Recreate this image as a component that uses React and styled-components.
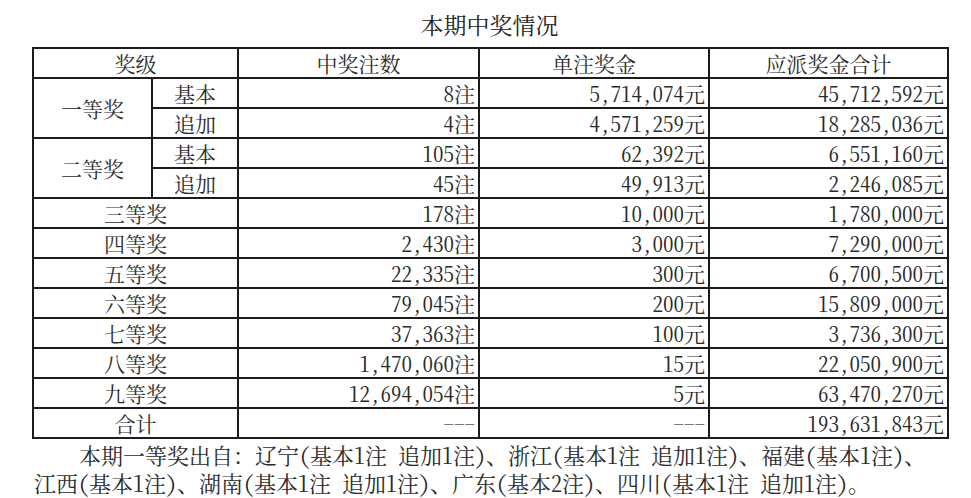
import React from 'react'
import styled, { createGlobalStyle } from 'styled-components'

const GlobalStyle = createGlobalStyle`
  html, body {
    margin: 0;
    padding: 0;
    background: #fff;
  }
  body {
    font-family: "Noto Serif CJK SC", "Liberation Serif", "Noto Sans CJK SC", serif;
    font-feature-settings: "hwid" 1;
    color: #2a2a2a;
  }
`

const Page = styled.div`
  width: 971px;
  padding: 10px 0 0 32px;
  box-sizing: border-box;
`

const Title = styled.h1`
  width: 915px;
  margin: 0 0 7px;
  height: 30px;
  line-height: 30px;
  font-size: 23px;
  font-weight: normal;
  text-align: center;
  color: #222;
`

const Table = styled.table`
  width: 915px;
  table-layout: fixed;
  border-collapse: collapse;
  border: 2px solid #1c1c1c;
  font-size: 21px;
`

const Row = styled.tr`
  height: 30px;
`

const Cell = styled.td`
  border: 2px solid #1c1c1c;
  padding: 0 ${p => (p.$align === 'right' ? '3px' : '0')} 0 0;
  text-align: ${p => p.$align || 'center'};
  vertical-align: middle;
  line-height: 26px;
  white-space: nowrap;
  color: ${p => (p.$muted ? '#777' : '#2a2a2a')};
`

const HeadCell = styled(Cell).attrs({ as: 'th' })`
  font-weight: normal;
`

const Note = styled.p`
  width: 915px;
  margin: 2px 0 0;
  padding-left: 2px;
  font-size: 22px;
  line-height: 28px;
  text-indent: 45px;
  color: #2a2a2a;
  box-sizing: border-box;
`

const tiered = [
  {
    level: '一等奖',
    parts: [
      ['基本', '8注', '5,714,074元', '45,712,592元'],
      ['追加', '4注', '4,571,259元', '18,285,036元'],
    ],
  },
  {
    level: '二等奖',
    parts: [
      ['基本', '105注', '62,392元', '6,551,160元'],
      ['追加', '45注', '49,913元', '2,246,085元'],
    ],
  },
]

const plain = [
  ['三等奖', '178注', '10,000元', '1,780,000元'],
  ['四等奖', '2,430注', '3,000元', '7,290,000元'],
  ['五等奖', '22,335注', '300元', '6,700,500元'],
  ['六等奖', '79,045注', '200元', '15,809,000元'],
  ['七等奖', '37,363注', '100元', '3,736,300元'],
  ['八等奖', '1,470,060注', '15元', '22,050,900元'],
  ['九等奖', '12,694,054注', '5元', '63,470,270元'],
]

export default function App() {
  return (
    <>
      <GlobalStyle />
      <Page>
        <Title>本期中奖情况</Title>
        <Table>
          <colgroup>
            <col style={{ width: 119 }} />
            <col style={{ width: 86 }} />
            <col style={{ width: 241 }} />
            <col style={{ width: 230 }} />
            <col style={{ width: 239 }} />
          </colgroup>
          <thead>
            <Row>
              <HeadCell colSpan={2}>奖级</HeadCell>
              <HeadCell>中奖注数</HeadCell>
              <HeadCell>单注奖金</HeadCell>
              <HeadCell>应派奖金合计</HeadCell>
            </Row>
          </thead>
          <tbody>
            {tiered.map(t =>
              t.parts.map(([sub, count, unit, total], i) => (
                <Row key={t.level + sub}>
                  {i === 0 && <Cell rowSpan={2}>{t.level}</Cell>}
                  <Cell>{sub}</Cell>
                  <Cell $align="right">{count}</Cell>
                  <Cell $align="right">{unit}</Cell>
                  <Cell $align="right">{total}</Cell>
                </Row>
              ))
            )}
            {plain.map(([level, count, unit, total]) => (
              <Row key={level}>
                <Cell colSpan={2}>{level}</Cell>
                <Cell $align="right">{count}</Cell>
                <Cell $align="right">{unit}</Cell>
                <Cell $align="right">{total}</Cell>
              </Row>
            ))}
            <Row>
              <Cell colSpan={2}>合计</Cell>
              <Cell $align="right" $muted>---</Cell>
              <Cell $align="right" $muted>---</Cell>
              <Cell $align="right">193,631,843元</Cell>
            </Row>
          </tbody>
        </Table>
        <Note>
          本期一等奖出自：辽宁(基本1注 追加1注)、浙江(基本1注 追加1注)、福建(基本1注)、
          <br />
          江西(基本1注)、湖南(基本1注 追加1注)、广东(基本2注)、四川(基本1注 追加1注)。
        </Note>
      </Page>
    </>
  )
}
